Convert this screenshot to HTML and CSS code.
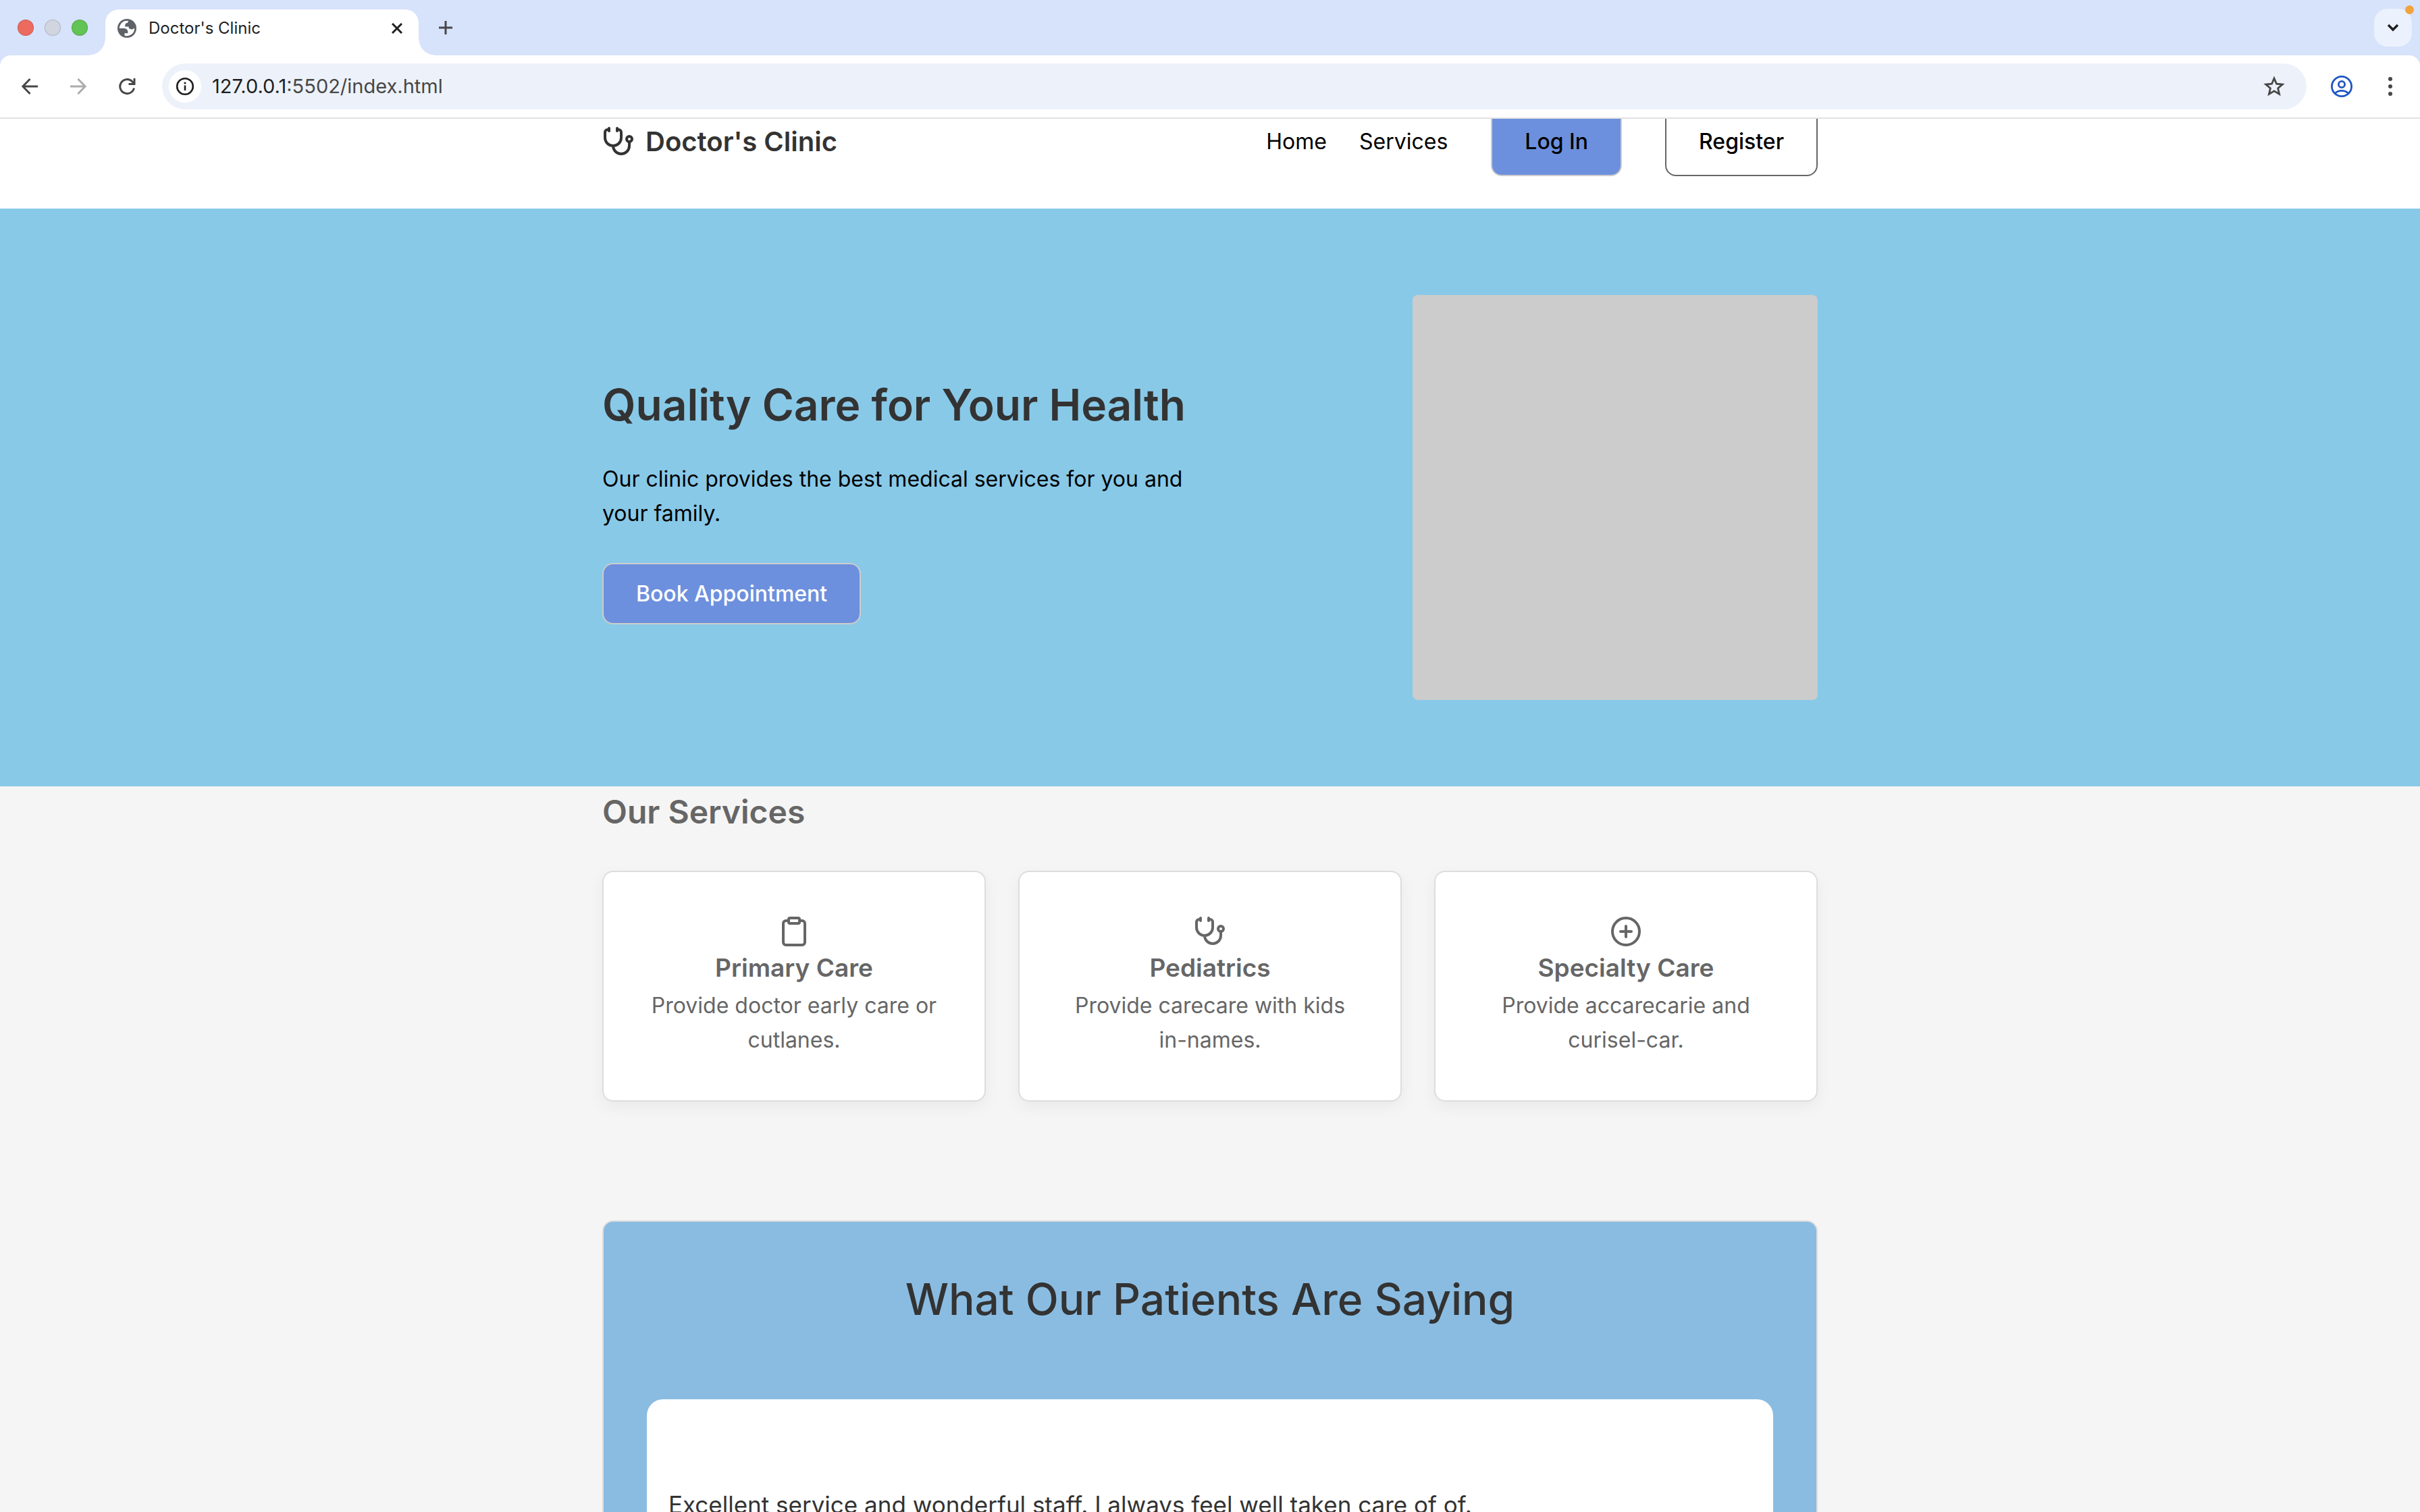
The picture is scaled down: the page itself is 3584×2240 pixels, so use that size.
FILE: index.html
```html
<!DOCTYPE html>
<html lang="en">
<head>
<meta charset="utf-8">
<title>Doctor's Clinic</title>
<link rel="stylesheet" href="styles.css">
</head>
<body>
<div class="browser">
  <div class="tab-strip">
    <div class="lights">
      <button class="light light-close" aria-label="Close window"></button>
      <button class="light light-min" aria-label="Minimise window"></button>
      <button class="light light-max" aria-label="Zoom window"></button>
    </div>
    <div class="tab">
      <svg class="globe" viewBox="2 2 20 20" aria-hidden="true">
        <circle cx="12" cy="12" r="10" fill="#5f6368"/>
        <path d="M4 12h4.400c3.407.022 4.922 1.730 4.543 5.127H9.488v2.470a8.004 8.004 0 0 0 10.498-8.083C19.327 12.504 18.332 13 17 13c-2.137 0-3.206-.916-3.206-2.750h-3.748c-.274-2.728.683-4.092 2.870-4.092 0-.975.327-1.597.811-1.970A8.004 8.004 0 0 0 4 12z" fill="#fff"/>
      </svg>
      <span class="tab-title">Doctor's Clinic</span>
      <button class="icon-button tab-close" aria-label="Close tab">
        <svg width="16" height="16" viewBox="0 0 16 16"><path d="M1 1L15 15M15 1L1 15" stroke="#1f1f1f" stroke-width="3" fill="none"/></svg>
      </button>
    </div>
    <button class="icon-button new-tab" aria-label="New tab">
      <svg width="20" height="20" viewBox="0 0 20 20"><path d="M10 0V20M0 10H20" stroke="#474747" stroke-width="3"/></svg>
    </button>
    <button class="tab-search" aria-label="Search tabs">
      <svg width="18" height="12" viewBox="0 0 18 12"><path d="M2 2L9 9L16 2" stroke="#1f1f1f" stroke-width="3.500" fill="none"/></svg>
      <span class="notice"></span>
    </button>
  </div>

  <div class="toolbar">
    <div class="history">
      <button class="icon-button" aria-label="Back">
        <svg width="24" height="24" viewBox="0 0 24 24"><path d="M24 12H2M12.500 1L1.800 12L12.500 23" stroke="#474747" stroke-width="3" fill="none"/></svg>
      </button>
      <button class="icon-button" aria-label="Forward" disabled>
        <svg width="24" height="24" viewBox="0 0 24 24"><path d="M0 12H22M11.500 1L22.200 12L11.500 23" stroke="#acacac" stroke-width="3" fill="none"/></svg>
      </button>
      <button class="icon-button" aria-label="Reload">
        <svg width="26" height="26" viewBox="0 0 26 26"><path d="M23.500 15.500A10.500 10.500 0 1 1 20.800 5.800L24 9" stroke="#474747" stroke-width="3" fill="none"/><path d="M24 1V9.500H15.500" stroke="#474747" stroke-width="3" fill="none"/></svg>
      </button>
    </div>
    <div class="address-bar">
      <button class="icon-button site-info" aria-label="Site information">
        <svg width="28" height="28" viewBox="0 0 28 28"><circle cx="14" cy="14" r="11.800" stroke="#1f1f1f" stroke-width="2.600" fill="none"/><path d="M14 12.500V20" stroke="#1f1f1f" stroke-width="2.600"/><circle cx="14" cy="9" r="1.600" fill="#1f1f1f"/></svg>
      </button>
      <div class="url"><span class="url-host">127.0.0.1</span>:5502/index.html</div>
      <button class="icon-button" aria-label="Bookmark this page">
        <svg width="32" height="32" viewBox="0 0 32 32"><path d="M16 4L19.500 12.200L28.300 13L21.600 18.800L23.600 27.400L16 22.800L8.400 27.400L10.400 18.800L3.700 13L12.500 12.200Z" stroke="#474747" stroke-width="2.800" fill="none"/></svg>
      </button>
    </div>
    <div class="toolbar-end">
      <button class="icon-button" aria-label="Profile">
        <svg width="32" height="32" viewBox="0 0 32 32" fill="none" stroke="#1f56c4" stroke-width="2.800"><circle cx="16" cy="16" r="14.600"/><circle cx="16" cy="13" r="4.600"/><path d="M6.500 26C11.500 21.200 20.500 21.200 25.500 26"/></svg>
      </button>
      <button class="icon-button" aria-label="Menu">
        <svg width="8" height="28" viewBox="0 0 8 28" fill="#474747"><circle cx="4" cy="3" r="3"/><circle cx="4" cy="14" r="3"/><circle cx="4" cy="25" r="3"/></svg>
      </button>
    </div>
  </div>

  <div class="viewport">
    <header class="site-header">
      <div class="container header-row">
        <a class="brand" href="#home">
          <svg class="icon" viewBox="0 0 24 24"><path d="M11 2v2M5 2v2M5 3H4a2 2 0 0 0-2 2v4a6 6 0 0 0 12 0V5a2 2 0 0 0-2-2h-1M8 15a6 6 0 0 0 12 0v-3"/><circle cx="20" cy="10" r="2"/></svg>
          <span>Doctor's Clinic</span>
        </a>
        <nav class="site-nav">
          <div class="nav-links">
            <a href="#home">Home</a>
            <a href="#services">Services</a>
          </div>
          <a class="button button-primary" href="#login">Log In</a>
          <a class="button button-outline" href="#register">Register</a>
        </nav>
      </div>
    </header>

    <main>
      <section class="hero" id="home">
        <div class="container hero-row">
          <div class="hero-text">
            <h1>Quality Care for Your Health</h1>
            <p>Our clinic provides the best medical services for you and your family.</p>
            <button class="button button-book">Book Appointment</button>
          </div>
          <div class="hero-image"></div>
        </div>
      </section>

      <section class="container services" id="services">
        <h2>Our Services</h2>
        <div class="cards">
          <article class="card">
            <svg class="icon" viewBox="0 0 24 24"><rect x="8" y="2" width="8" height="4" rx="1"/><path d="M16 4h2a2 2 0 0 1 2 2v14a2 2 0 0 1-2 2H6a2 2 0 0 1-2-2V6a2 2 0 0 1 2-2h2"/></svg>
            <h3>Primary Care</h3>
            <p>Provide doctor early care or cutlanes.</p>
          </article>
          <article class="card">
            <svg class="icon" viewBox="0 0 24 24"><path d="M11 2v2M5 2v2M5 3H4a2 2 0 0 0-2 2v4a6 6 0 0 0 12 0V5a2 2 0 0 0-2-2h-1M8 15a6 6 0 0 0 12 0v-3"/><circle cx="20" cy="10" r="2"/></svg>
            <h3>Pediatrics</h3>
            <p>Provide carecare with kids in-names.</p>
          </article>
          <article class="card">
            <svg class="icon" viewBox="0 0 24 24"><circle cx="12" cy="12" r="10"/><path d="M8 12h8M12 8v8"/></svg>
            <h3>Specialty Care</h3>
            <p>Provide accarecarie and curisel-car.</p>
          </article>
        </div>
      </section>

      <section class="container">
        <div class="testimonials">
          <h2>What Our Patients Are Saying</h2>
          <blockquote class="quote">
            <p>Excellent service and wonderful staff. I always feel well taken care of of.</p>
          </blockquote>
        </div>
      </section>
    </main>
  </div>
</div>
</body>
</html>
```
FILE: styles.css
```css
* {
  box-sizing: border-box;
}

body {
  margin: 0;
  font-family: Inter, "Liberation Sans", sans-serif;
  font-size: 32px;
  line-height: 51px;
  color: #000;
  background: #f5f5f5;
}

h1, h2, h3, p, blockquote {
  margin: 0;
}

a {
  color: inherit;
  text-decoration: none;
}

button {
  border: 0;
  padding: 0;
  background: none;
  font-family: inherit;
  color: inherit;
}

svg {
  display: block;
  flex-shrink: 0;
}

/* Browser window */
.browser {
  display: flex;
  flex-direction: column;
  height: 100vh;
  background: #d7e2fb;
}

.tab-strip {
  display: flex;
  align-items: flex-end;
  height: 82px;
  padding: 0 12px 0 26px;
}

.lights {
  display: flex;
  gap: 16px;
  align-self: center;
  margin-right: 26px;
}

.light {
  width: 24px;
  height: 24px;
  border: 1px solid rgba(0, 0, 0, 0.15);
  border-radius: 50%;
}

.light-close { background: #ed6a5e; }
.light-min { background: #d0d5e0; }
.light-max { background: #61c454; }

.tab {
  position: relative;
  display: flex;
  align-items: center;
  width: 464px;
  height: 68px;
  padding: 0 8px 12px 18px;
  border-radius: 20px 20px 0 0;
  background: #fff;
}

.tab::before,
.tab::after {
  content: "";
  position: absolute;
  bottom: 0;
  width: 24px;
  height: 24px;
}

.tab::before {
  right: 100%;
  background: radial-gradient(circle at 0 0, transparent 23px, #fff 24px);
}

.tab::after {
  left: 100%;
  background: radial-gradient(circle at 100% 0, transparent 23px, #fff 24px);
}

.globe {
  width: 28px;
  height: 28px;
}

.tab-title {
  flex: 1;
  margin-left: 18px;
  font-size: 24px;
  line-height: 32px;
  color: #1f1f1f;
}

.icon-button {
  display: flex;
  align-items: center;
  justify-content: center;
  flex-shrink: 0;
  width: 48px;
  height: 48px;
  border-radius: 50%;
}

.new-tab {
  align-self: center;
  margin-left: 16px;
}

.tab-search {
  position: relative;
  display: flex;
  align-items: center;
  justify-content: center;
  align-self: center;
  width: 56px;
  height: 56px;
  margin-left: auto;
  border-radius: 20px;
  background: #ebf2fd;
}

.notice {
  position: absolute;
  top: -5px;
  right: -3px;
  width: 13px;
  height: 13px;
  border-radius: 50%;
  background: #f2a33c;
}

.toolbar {
  display: flex;
  align-items: center;
  gap: 28px;
  height: 94px;
  padding: 0 20px;
  border-bottom: 2px solid #e1e1e1;
  border-radius: 16px 16px 0 0;
  background: #fff;
}

.history,
.toolbar-end {
  display: flex;
  gap: 24px;
}

.address-bar {
  display: flex;
  align-items: center;
  flex: 1;
  height: 68px;
  padding: 0 24px 0 10px;
  border-radius: 34px;
  background: #edf2fa;
}

.site-info {
  background: #fff;
}

.url {
  flex: 1;
  margin-left: 16px;
  font-size: 29px;
  line-height: 40px;
  color: #474747;
}

.url-host {
  color: #1f1f1f;
}

/* Page, scrolled slightly past the top of the header */
.viewport {
  flex: 1;
  min-height: 0;
  overflow: hidden;
  background: #f5f5f5;
}

.container {
  width: 100%;
  max-width: 1800px;
  margin: 0 auto;
}

.icon {
  width: 48px;
  height: 48px;
  fill: none;
  stroke: currentColor;
  stroke-width: 2;
  stroke-linecap: round;
  stroke-linejoin: round;
}

.site-header {
  margin-top: -66px;
  padding: 48px 0;
  background: #fff;
}

.header-row {
  display: flex;
  align-items: center;
  justify-content: space-between;
}

.brand {
  display: flex;
  align-items: center;
  gap: 16px;
  font-size: 40px;
  font-weight: 600;
  color: #333;
}

.site-nav {
  display: flex;
  align-items: center;
  gap: 64px;
}

.nav-links {
  display: flex;
  gap: 48px;
}

.button {
  padding: 24px 48px;
  border: 2px solid #ccc;
  border-radius: 16px;
  font-size: 32px;
  font-weight: 500;
}

.button-primary {
  background: #6d90de;
}

.button-outline {
  border-color: #666;
}

.button-book {
  align-self: flex-start;
  background: #6d90de;
  color: #fff;
}

.hero {
  padding: 128px 0;
  background: #88c9e8;
}

.hero-row {
  display: flex;
  align-items: center;
  justify-content: space-between;
}

.hero-text {
  display: flex;
  flex-direction: column;
  max-width: 900px;
}

.hero-text h1 {
  margin-bottom: 34px;
  font-size: 64px;
  font-weight: 600;
  line-height: 100px;
  color: #333;
}

.hero-text p {
  margin-bottom: 48px;
}

.hero-image {
  width: 600px;
  height: 600px;
  border-radius: 8px;
  background: #ccc;
}

.services {
  margin-bottom: 176px;
  color: #666;
}

.services h2 {
  margin-bottom: 49px;
  font-size: 48px;
  font-weight: 600;
  line-height: 76px;
}

.cards {
  display: grid;
  grid-template-columns: repeat(3, 1fr);
  gap: 48px;
}

.card {
  display: flex;
  flex-direction: column;
  align-items: center;
  padding: 64px;
  border: 2px solid #ddd;
  border-radius: 16px;
  background: #fff;
  box-shadow: 0 8px 24px rgba(0, 0, 0, 0.05);
  text-align: center;
}

.card h3 {
  font-size: 37px;
  font-weight: 600;
  line-height: 60px;
}

.testimonials {
  padding: 64px;
  border: 2px solid #ddd;
  border-radius: 16px;
  background: #8abce1;
  color: #333;
}

.testimonials h2 {
  margin-bottom: 97px;
  font-size: 64px;
  font-weight: 500;
  line-height: 102px;
  text-align: center;
}

.quote {
  padding: 128px 32px;
  border-radius: 24px;
  background: #fff;
  font-size: 35px;
  line-height: 57px;
}
```
